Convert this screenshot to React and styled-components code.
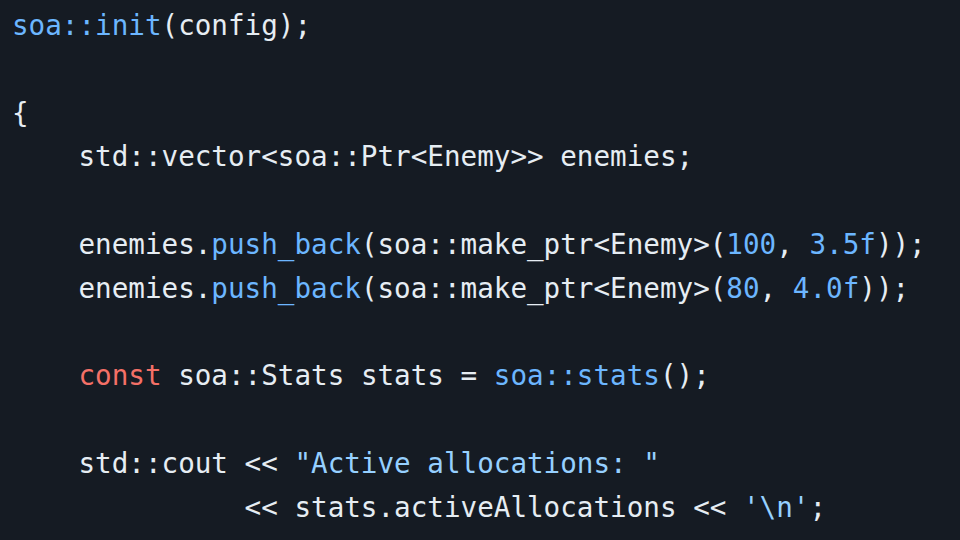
import React from "react";
import styled, { createGlobalStyle } from "styled-components";

const Global = createGlobalStyle`
  html, body { margin: 0; padding: 0; background: #151b23; }
  #root { width: 960px; height: 540px; overflow: hidden; }
`;

const colors = {
  plain: "#e6edf3",
  fn: "#6cb6ff",
  num: "#6cb6ff",
  str: "#96d0ff",
  kw: "#f47067",
};

const CodeBlock = styled.pre`
  margin: 0;
  box-sizing: border-box;
  width: 960px;
  height: 540px;
  padding: 4px 12px;
  background: #151b23;
  color: ${colors.plain};
  font-family: "DejaVu Sans Mono", "Liberation Mono", monospace;
  font-size: 27.6px;
  line-height: 43.8px;
  white-space: pre;
  overflow: hidden;
`;

const Line = styled.div`
  height: 43.8px;
`;

const Tok = styled.span`
  color: ${(p) => colors[p.$k] || colors.plain};
`;

const lines = [
  [["fn", "soa::init"], ["plain", "(config);"]],
  [],
  [["plain", "{"]],
  [["plain", "    std::vector<soa::Ptr<Enemy>> enemies;"]],
  [],
  [
    ["plain", "    enemies."],
    ["fn", "push_back"],
    ["plain", "(soa::make_ptr<Enemy>("],
    ["num", "100"],
    ["plain", ", "],
    ["num", "3.5f"],
    ["plain", "));"],
  ],
  [
    ["plain", "    enemies."],
    ["fn", "push_back"],
    ["plain", "(soa::make_ptr<Enemy>("],
    ["num", "80"],
    ["plain", ", "],
    ["num", "4.0f"],
    ["plain", "));"],
  ],
  [],
  [
    ["plain", "    "],
    ["kw", "const"],
    ["plain", " soa::Stats stats = "],
    ["fn", "soa::stats"],
    ["plain", "();"],
  ],
  [],
  [["plain", "    std::cout << "], ["str", "\"Active allocations: \""]],
  [
    ["plain", "              << stats.activeAllocations << "],
    ["str", "'\\n'"],
    ["plain", ";"],
  ],
];

export default function App() {
  return (
    <>
      <Global />
      <CodeBlock>
        {lines.map((toks, i) => (
          <Line key={i}>
            {toks.map(([k, t], j) => (
              <Tok key={j} $k={k}>
                {t}
              </Tok>
            ))}
          </Line>
        ))}
      </CodeBlock>
    </>
  );
}
